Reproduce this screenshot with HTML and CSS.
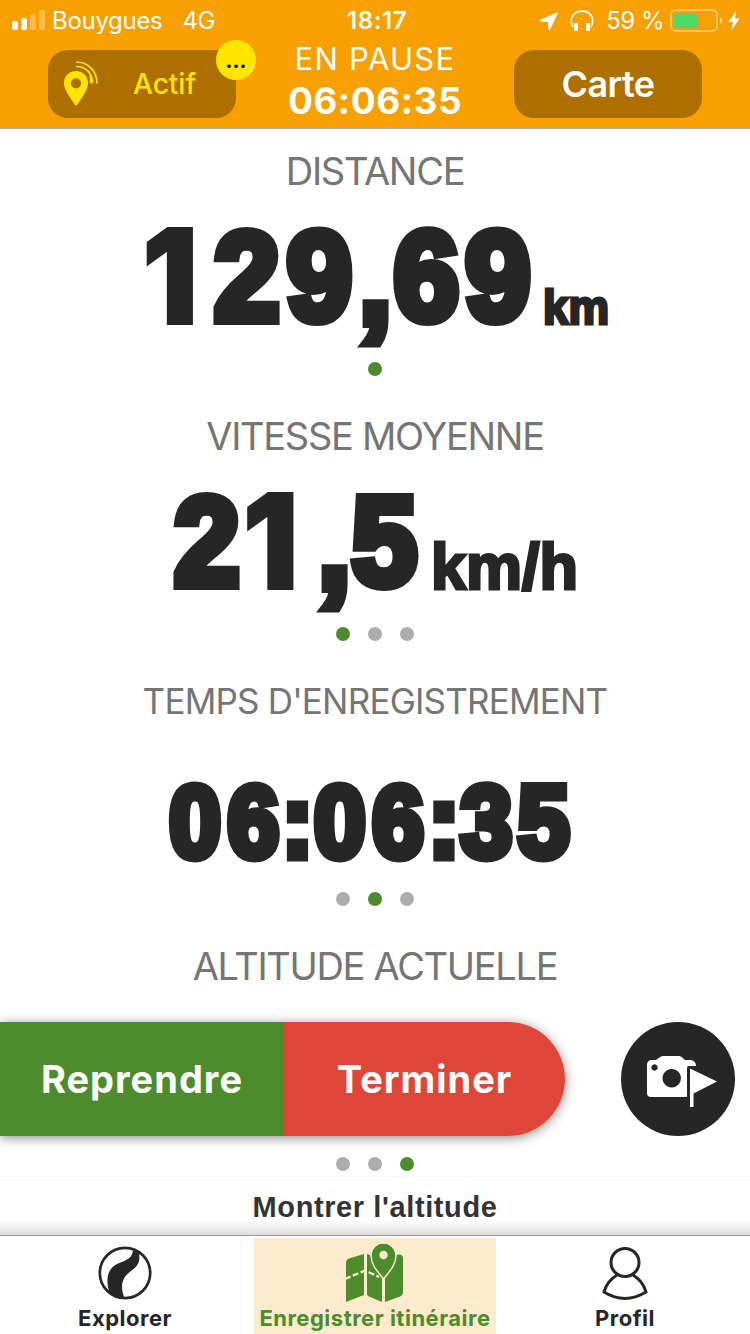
FILE: index.html
```html
<!DOCTYPE html>
<html lang="fr">
<head>
  <meta charset="UTF-8">
  <meta name="viewport" content="width=device-width, initial-scale=1.0">
  <title>Enregistrer itinéraire</title>
  <link rel="stylesheet" href="styles.css">
</head>
<body>
  <div class="app">
    <header class="header">
      <div class="status">
        <div class="status-left">
          <svg class="signal" width="34" height="22" viewBox="0 0 34 22" fill="#fff">
            <rect x="0" y="11" width="6" height="9" rx="2"/>
            <rect x="9" y="8" width="6" height="12" rx="2"/>
            <rect x="18" y="4" width="6" height="16" rx="2" opacity=".3"/>
            <rect x="27" y="0" width="6" height="20" rx="2" opacity=".3"/>
          </svg>
          <span class="carrier">Bouygues</span>
          <span class="network">4G</span>
        </div>
        <div class="clock">18:17</div>
        <div class="status-right">
          <svg class="arrow" width="20" height="20" viewBox="0 0 20 20" fill="#fff"><path d="M18.500 1.200 1.200 8.800Q.3 10 1.500 10.500L9 11 9.400 18.300Q10 19.600 11.300 18.300L19 1.800Q19.200 1 18.500 1.200Z"/></svg>
          <svg class="headphones" width="24" height="22" viewBox="0 0 24 22" fill="none">
            <path d="M3 17C-1 10 2.500 1.200 12 1.200S25 10 21 17" stroke="#fff" stroke-width="1.700"/>
            <rect x="4" y="13" width="4" height="8" rx="1" fill="#fff"/>
            <rect x="16" y="13" width="4" height="8" rx="1" fill="#fff"/>
          </svg>
          <span class="percent">59 %</span>
          <svg class="battery" width="53" height="24" viewBox="0 0 53 24">
            <rect x="1" y="1" width="46" height="21" rx="5" fill="none" stroke="#fff" stroke-opacity=".4" stroke-width="2"/>
            <rect x="4" y="4" width="24" height="15" fill="#4cd964"/>
            <path d="M50 8q5 3.500 0 7z" fill="#fff" fill-opacity=".4"/>
          </svg>
          <svg class="bolt" width="12" height="20" viewBox="0 0 12 20" fill="#fff"><path d="M8 0 .5 11H5L3.500 19.500 11.500 7.500H7Z"/></svg>
        </div>
      </div>
      <div class="toolbar">
        <button class="pill pill-gps">
          <svg class="gps" width="36" height="48" viewBox="0 0 36 48">
            <path fill="#ffe500" fill-rule="evenodd" d="M13 11C6 11 1 16.300 1 23c0 7 6 14 10.500 21.500Q13 46.500 14.500 44.500C19 37 25 30 25 23c0-6.700-5-12-12-12zm0 7.200a5 5 0 1 1 0 10.200a5 5 0 1 1 0-10.200z"/>
            <path fill="none" stroke="#ffe500" stroke-width="1.700" d="M13 2C25 2 34 11 34 23.500M13 6.500C23 6.500 29.500 13 29.500 23.500M27 23c1-2 1-5 0-7"/>
          </svg>
          <span>Actif</span>
          <span class="badge">...</span>
        </button>
        <div class="session">
          <div class="session-state">EN PAUSE</div>
          <div class="session-time">06:06:35</div>
        </div>
        <button class="pill pill-map">Carte</button>
      </div>
    </header>

    <main class="metrics">
      <section class="metric">
        <h2>DISTANCE</h2>
        <svg class="figure" width="750" height="150" viewBox="0 0 750 150">
          <text class="digits" transform="translate(0 114) scale(.93 1)" x="153 230 308 386 423 500"><tspan class="one" dy="4">1</tspan><tspan dy="-4">29</tspan><tspan dy="3">,</tspan><tspan dy="-3">69</tspan></text>
          <text class="unit" x="543" y="118" font-size="48" textLength="66" lengthAdjust="spacingAndGlyphs">km</text>
        </svg>
        <div class="dots"><i class="on"></i></div>
      </section>
      <section class="metric">
        <h2>VITESSE MOYENNE</h2>
        <svg class="figure" width="750" height="150" viewBox="0 0 750 150">
          <text class="digits" transform="translate(0 114) scale(.93 1)" x="187 261 342 378">2<tspan class="one" dy="4">1</tspan><tspan dy="-1">,</tspan><tspan dy="-3">5</tspan></text>
          <text class="unit" x="431" y="118" font-size="64" textLength="147" lengthAdjust="spacingAndGlyphs">km/h</text>
        </svg>
        <div class="dots"><i class="on"></i><i></i><i></i></div>
      </section>
      <section class="metric">
        <h2 class="small">TEMPS D'ENREGISTREMENT</h2>
        <svg class="figure" width="750" height="150" viewBox="0 0 750 150">
          <text class="digits timer" transform="translate(0 120.500) scale(.91 1)" x="186 250 310 345 409 471 506 569">06:06:35</text>
        </svg>
        <div class="dots"><i></i><i class="on"></i><i></i></div>
      </section>
      <section class="metric last">
        <h2>ALTITUDE ACTUELLE</h2>
        <div class="figure"></div>
        <div class="dots"><i></i><i></i><i class="on"></i></div>
      </section>

      <!-- floats over the last metric -->
      <div class="actions">
        <div class="split">
          <button class="resume">Reprendre</button>
          <button class="finish">Terminer</button>
        </div>
        <button class="camera">
          <svg width="72" height="54" viewBox="0 0 72 54">
            <path fill="#fff" fill-rule="evenodd" d="M6 5H10Q15 1 17 1H33Q35 1 39 5H45Q50 6 50 11H43Q41 11 41 13V42H5Q1 42 1 38V10Q1 5 6 5ZM8.500 9.300a3.200 3.200 0 1 0 .01 0zM25.700 14a9.200 9.200 0 1 0 .01 0z"/>
            <path fill="#fff" d="M44 13.500 71 26.500 47.500 38.500V52H44Z"/>
          </svg>
        </button>
      </div>
    </main>

    <div class="altitude">Montrer l'altitude</div>

    <nav class="tabs">
      <a class="tab">
        <svg class="logo" width="54" height="54" viewBox="0 0 54 54">
          <circle cx="27" cy="27" r="25.200" fill="none" stroke="#262626" stroke-width="2.700"/>
          <path fill="#262626" d="M35 3 41 7C43 18 38 21 33 25C23 32 22 42 27 53Q17 53 11 45C7 31 11 22 19 18C29 14 35 12 35 3Z"/>
        </svg>
        <span>Explorer</span>
      </a>
      <a class="tab active">
        <svg width="60" height="60" viewBox="0 0 60 60">
          <path fill="#4c8c2b" d="M1 20Q1 17 4 15.500L19 11V52L1 59ZM22 11 37 17V59L24 53.500Q22 52.500 22 51ZM40 18 53 11.500Q58 11 58 15V49Q58 52 55 53.500L40 59Z"/>
          <path fill="none" stroke="#fdebcd" stroke-width="2.400" stroke-dasharray="6 2.500" d="M0 36 19 28Q22 28 34 34"/>
          <path fill="#4c8c2b" stroke="#fdebcd" stroke-width="1.500" d="M38.500 0C31.500 0 26 5.500 26 12.500C26 22 33 29 38.500 36C44 29 51 22 51 12.500C51 5.500 45.500 0 38.500 0Z"/>
          <circle cx="38.500" cy="12" r="4.200" fill="#fdebcd"/>
        </svg>
        <span>Enregistrer itinéraire</span>
      </a>
      <a class="tab">
        <svg class="person" width="46" height="54" viewBox="0 0 46 54" fill="none" stroke="#262626" stroke-width="3">
          <circle cx="23" cy="15.500" r="14"/>
          <path d="M15 28Q5 34 2 45Q23 58 44 45Q41 34 31 28"/>
        </svg>
        <span>Profil</span>
      </a>
    </nav>
  </div>
</body>
</html>
```
FILE: styles.css
```css
* {
  box-sizing: border-box;
}
body {
  margin: 0;
  font-family: Inter, "Liberation Sans", sans-serif;
  background: #fff;
}
button {
  border: none;
  padding: 0;
  font-family: inherit;
  color: #fff;
}
.app {
  width: 750px;
  height: 1334px;
  display: flex;
  flex-direction: column;
  overflow: hidden;
}
.header {
  height: 129px;
  background: #f7a000;
  border-bottom: 1px solid #b0aca4;
  color: #fff;
}

/* status bar */
.status {
  height: 40px;
  display: grid;
  grid-template-columns: 1fr auto 1fr;
  align-items: center;
  padding: 1px 10px 0 12px;
  font-size: 24px;
  line-height: 40px;
}
.status-left,
.status-right {
  display: flex;
  align-items: center;
}
.status-right {
  justify-content: flex-end;
}
.carrier {
  margin-left: 6px;
  letter-spacing: -0.3px;
}
.network {
  margin-left: 20px;
  letter-spacing: -0.5px;
}
.clock {
  padding-left: 2px;
  font-weight: 600;
  letter-spacing: 0.6px;
}
.headphones {
  margin-left: 11px;
}
.percent {
  margin-left: 12px;
  letter-spacing: -0.5px;
}
.battery {
  margin-left: 6px;
}
.bolt {
  margin-left: 5px;
}

/* toolbar */
.toolbar {
  display: flex;
  justify-content: space-between;
  padding: 0 48px;
}
.pill {
  width: 188px;
  height: 68px;
  margin-top: 10px;
  border-radius: 20px;
  background: #ad7000;
}
.pill-gps {
  position: relative;
  display: flex;
  align-items: center;
  padding-left: 15px;
  font-size: 28px;
  font-weight: 500;
  color: #ffe500;
}
.pill-gps span:not(.badge) {
  margin-left: 34px;
}
.badge {
  position: absolute;
  top: -10px;
  right: -20px;
  width: 40px;
  height: 40px;
  border-radius: 50%;
  background: #ffe500;
  color: #000;
  font-size: 22px;
  font-weight: 600;
  line-height: 40px;
  text-align: center;
}
.pill-map {
  font-size: 36px;
  font-weight: 600;
  letter-spacing: -0.6px;
}
.session {
  text-align: center;
}
.session-state {
  font-size: 31px;
  line-height: 38px;
  letter-spacing: 1.3px;
}
.session-time {
  font-size: 37px;
  line-height: 46px;
  font-weight: 700;
  letter-spacing: 0.5px;
}

/* metrics */
.metrics {
  position: relative;
  height: 1047px;
}
.metric {
  height: 265px;
  display: flex;
  flex-direction: column;
  align-items: center;
}
.metric.last {
  height: 252px;
}
.metric h2 {
  margin: 0;
  height: 77px;
  padding-top: 18px;
  font-size: 38px;
  line-height: 48px;
  font-weight: 400;
  letter-spacing: -1.3px;
  color: #757575;
}
.metric h2.small {
  font-size: 35px;
  letter-spacing: -0.8px;
}
.figure {
  height: 150px;
  display: block;
  overflow: visible;
}
.digits {
  font-family: "Liberation Sans", Arial, sans-serif;
  font-size: 127px;
  font-weight: 700;
  fill: #262626;
  stroke: #262626;
  stroke-width: 10px;
}
.digits.timer {
  font-size: 102px;
  stroke-width: 9px;
}
/* the Liberation 1 has a foot, this one doesn't */
.digits .one {
  font-family: Inter, sans-serif;
  font-size: 132px;
  font-weight: 900;
  stroke-width: 2px;
}
.unit {
  font-family: "Liberation Sans", Arial, sans-serif;
  font-weight: 700;
  fill: #262626;
  stroke: #262626;
  stroke-width: 3px;
}
.dots {
  display: flex;
  gap: 18px;
  padding-top: 6px;
}
.dots i {
  width: 14px;
  height: 14px;
  border-radius: 50%;
  background: #adadad;
}
.dots .on {
  background: #4c8c2b;
}

.actions {
  position: absolute;
  left: 0;
  right: 15px;
  bottom: 40px;
  display: flex;
  justify-content: space-between;
}
.split {
  display: flex;
  height: 114px;
  border-radius: 0 57px 57px 0;
  overflow: hidden;
  box-shadow: 0 2px 12px rgba(0, 0, 0, 0.45);
}
.split button {
  font-size: 38px;
  font-weight: 700;
  letter-spacing: 1px;
}
.resume {
  width: 284px;
  background: #4c8c2b;
}
.finish {
  width: 281px;
  background: #df4637;
}
.camera {
  width: 114px;
  height: 114px;
  padding: 6px 0 0 8px;
  border-radius: 50%;
  background: #262626;
  display: flex;
  align-items: center;
  justify-content: center;
}

.altitude {
  height: 59px;
  border-top: 1px solid #f7f7f7;
  background: linear-gradient(#fff 75%, #dcdcdc);
  color: #333;
  font-family: "Liberation Sans", Arial, sans-serif;
  font-size: 29px;
  font-weight: 700;
  letter-spacing: 0.6px;
  line-height: 60px;
  text-align: center;
}

/* bottom tabs */
.tabs {
  height: 99px;
  border-top: 1px solid #999;
  display: grid;
  grid-template-columns: repeat(3, 1fr);
}
.tab {
  margin: 2px 4px 0;
  padding-bottom: 1px;
  display: flex;
  flex-direction: column;
  align-items: center;
  justify-content: flex-end;
  font-size: 22px;
  font-weight: 700;
  letter-spacing: 0.5px;
  line-height: 30px;
  white-space: nowrap;
  color: #262626;
}
.tab.active {
  background: #fdebcd;
  color: #4c8c2b;
}
.logo {
  margin-bottom: 3px;
}
.person {
  margin-bottom: 2px;
}
```
